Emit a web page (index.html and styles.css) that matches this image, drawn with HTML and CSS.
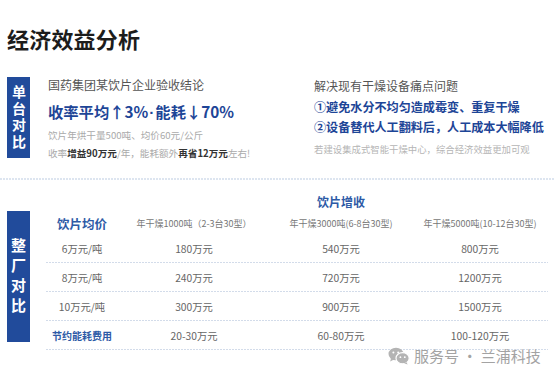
FILE: index.html
```html
<!DOCTYPE html>
<html lang="zh">
<head>
<meta charset="utf-8">
<link rel="stylesheet" href="styles.css">
</head>
<body>
<div class="page">
  <h1 class="title">经济效益分析</h1>

  <section class="sec sec-top">
    <div class="tag tag-top"><span class="vt">单台对比</span></div>
    <div class="cols">
      <div class="col">
        <div class="sub">国药集团某饮片企业验收结论</div>
        <div class="big">收率平均↑3%<span class="dot">·</span>能耗↓70%</div>
        <div class="note n1">饮片年烘干量500吨、均价60元/公斤</div>
        <div class="note n2">收率<b>增益90万元</b>/年，能耗额外<b>再省12万元</b>左右!</div>
      </div>
      <div class="col">
        <div class="sub r1">解决现有干燥设备痛点问题</div>
        <div class="pt r2">①避免水分不均匀造成霉变、重复干燥</div>
        <div class="pt r3">②设备替代人工翻料后，人工成本大幅降低</div>
        <div class="note r4">若建设集成式智能干燥中心，综合经济效益更加可观</div>
      </div>
    </div>
  </section>

  <div class="divider"></div>

  <section class="sec sec-bottom">
    <div class="tag tag-bottom"><span class="vt">整厂对比</span></div>
    <div class="table">
      <div class="row row-cap"><span></span><span></span><span class="cap">饮片增收</span><span></span></div>
      <div class="row row-head">
        <span class="h1">饮片均价</span>
        <span class="h">年干燥1000吨（2-3台30型）</span>
        <span class="h">年干燥3000吨(6-8台30型)</span>
        <span class="h">年干燥5000吨(10-12台30型)</span>
      </div>
      <div class="row row-data"><span>6万元/吨</span><span>180万元</span><span>540万元</span><span>800万元</span></div>
      <div class="row row-data"><span>8万元/吨</span><span>240万元</span><span>720万元</span><span>1200万元</span></div>
      <div class="row row-data"><span>10万元/吨</span><span>300万元</span><span>900万元</span><span>1500万元</span></div>
      <div class="row row-data"><span class="blue">节约能耗费用</span><span>20-30万元</span><span>60-80万元</span><span>100-120万元</span></div>
    </div>
  </section>

  <div class="watermark">
    <svg class="wx" width="22" height="18" viewBox="0 0 22 18">
      <ellipse cx="8" cy="7" rx="7.5" ry="6.3" fill="#b4b4b4"/>
      <path d="M3 11.5 L2.2 14.6 L6 12.6 Z" fill="#b4b4b4"/>
      <ellipse cx="14.6" cy="11.2" rx="6.6" ry="5.6" fill="#b4b4b4" stroke="#fff" stroke-width="1.2"/>
      <path d="M18.5 15.2 L19.6 17.6 L16.2 16.2 Z" fill="#b4b4b4"/>
      <circle cx="5.4" cy="5.4" r="1" fill="#fff"/>
      <circle cx="10.2" cy="5.4" r="1" fill="#fff"/>
      <circle cx="12.4" cy="10.2" r="0.9" fill="#fff"/>
      <circle cx="16.8" cy="10.2" r="0.9" fill="#fff"/>
    </svg>
    <span>服务号 · 兰浦科技</span>
  </div>
</div>
</body>
</html>
```

FILE: styles.css
```css
* { box-sizing: border-box; }
html, body { margin: 0; padding: 0; background: #fff; }
body {
  font-family: "Noto Sans CJK SC", "Noto Sans", sans-serif;
  width: 555px;
  height: 379px;
  overflow: hidden;
}
.page { position: relative; width: 555px; height: 379px; }

.title {
  margin: 0;
  padding: 23px 0 0 7px;
  font-size: 22px;
  line-height: 30px;
  font-weight: 700;
  color: #1c1c1c;
  letter-spacing: 0.2px;
}

.sec { display: flex; padding-left: 7px; }
.sec-top { margin-top: 24px; height: 101px; }

.tag {
  width: 23px;
  background: #214b9b;
  color: #fff;
  font-weight: 700;
  display: flex;
  justify-content: center;
  align-items: flex-start;
  flex: none;
}
.vt {
  writing-mode: vertical-rl;
  text-orientation: upright;
  line-height: 23px;
}
.tag-top { height: 81px; padding-top: 8px; font-size: 14px; }
.tag-top .vt { letter-spacing: 2.5px; }
.tag-bottom { height: 131px; margin-top: 21px; padding-top: 27px; font-size: 15px; }
.tag-bottom .vt { letter-spacing: 5px; }

.cols {
  display: grid;
  grid-template-columns: 266px 1fr;
  margin-left: 18px;
}
.col { display: flex; flex-direction: column; }

.sub { font-size: 12px; line-height: 16px; color: #555; }
.big {
  margin-top: 6px;
  font-size: 15.3px;
  line-height: 24px;
  font-weight: 700;
  color: #1d4597;
  white-space: nowrap;
}
.dot { font-family: "Liberation Sans", sans-serif; margin: 0 1px; }
.note { font-size: 9.6px; color: #aaa; white-space: nowrap; }
.note b { color: #333; font-weight: 700; }
.n1 { margin-top: 2px; line-height: 17px; }
.n2 { line-height: 18px; }

.r1 { line-height: 18px; }
.pt {
  font-size: 12.1px;
  line-height: 20px;
  font-weight: 700;
  color: #1d4597;
  white-space: nowrap;
}
.r2 { margin-top: 2px; }
.r4 { margin-top: 3px; line-height: 18px; font-size: 9.4px; color: #b5b5b5; }

.divider {
  height: 2px;
  background: repeating-linear-gradient(90deg, #dde5f0 0 2px, transparent 2px 3px);
}

.sec-bottom { margin-top: 10px; }
.table { margin-left: 16px; width: 502px; }
.row {
  display: grid;
  grid-template-columns: 72px 152px 142px 136px;
  align-items: center;
  text-align: center;
}
.row-cap { height: 22px; }
.cap { font-size: 12px; font-weight: 700; color: #2d5aa6; }
.row-head { height: 22px; }
.h1 { font-size: 12.5px; font-weight: 700; color: #2d5aa6; }
.h { font-size: 9px; color: #777; white-space: nowrap; }
.row-data {
  height: 29px;
  font-size: 10.3px;
  color: #666;
  background-image: repeating-linear-gradient(90deg, #d3dcea 0 2px, transparent 2px 3px);
  background-size: 100% 1px;
  background-repeat: no-repeat;
  background-position: bottom left;
  padding-bottom: 1px;
}
.blue { color: #2d5aa6; font-weight: 700; font-size: 10px; }

.watermark {
  position: absolute;
  left: 388px;
  top: 346px;
  display: flex;
  align-items: center;
  gap: 4px;
  color: #a3a3a3;
  font-size: 15px;
  line-height: 20px;
}
.wx { display: block; }
```
